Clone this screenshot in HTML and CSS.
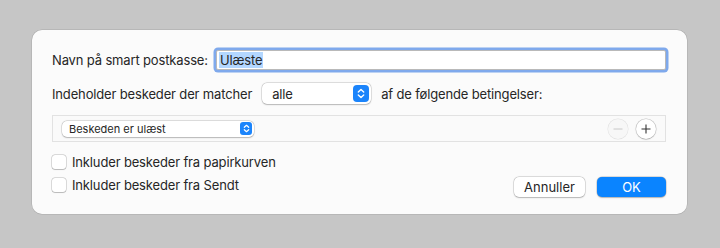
FILE: index.html
```html
<!DOCTYPE html>
<html lang="da">
<head>
  <meta charset="UTF-8" />
  <title>Smart postkasse</title>
  <link rel="stylesheet" href="styles.css">
</head>
<body>
  <div class="sheet">
    <div class="row name-row">
      <label for="box-name">Navn på smart postkasse:</label>
      <div class="field"><span class="sel">Ulæste</span></div>
    </div>

    <div class="row match-row">
      <span>Indeholder beskeder der matcher</span>
      <div class="popup big">
        <span>alle</span>
        <span class="stepper">
          <svg width="8" height="11" viewBox="0 0 8 11"><path d="M1.3 4 L4 1.5 L6.7 4 M1.3 7 L4 9.5 L6.7 7" fill="none" stroke="#fff" stroke-width="1.4" stroke-linecap="round" stroke-linejoin="round"/></svg>
        </span>
      </div>
      <span>af de følgende betingelser:</span>
    </div>

    <div class="criteria">
      <div class="popup small">
        <span>Beskeden er ulæst</span>
        <span class="stepper">
          <svg width="7" height="9" viewBox="0 0 7 9"><path d="M1.3 3.3 L3.5 1.3 L5.7 3.3 M1.3 5.7 L3.5 7.7 L5.7 5.7" fill="none" stroke="#fff" stroke-width="1.2" stroke-linecap="round" stroke-linejoin="round"/></svg>
        </span>
      </div>
      <div class="round-btns">
        <span class="round off">
          <svg width="10" height="10" viewBox="0 0 10 10"><path d="M0.5 5 H9.5" stroke="#c8c8c8" stroke-width="1"/></svg>
        </span>
        <span class="round">
          <svg width="10" height="10" viewBox="0 0 10 10"><path d="M0.5 5 H9.5 M5 0.5 V9.5" stroke="#333" stroke-width="1.1"/></svg>
        </span>
      </div>
    </div>

    <div class="bottom">
      <div class="checks">
        <label class="check"><span class="box"></span>Inkluder beskeder fra papirkurven</label>
        <label class="check"><span class="box"></span>Inkluder beskeder fra Sendt</label>
      </div>
      <div class="buttons">
        <button class="btn">Annuller</button>
        <button class="btn primary">OK</button>
      </div>
    </div>
  </div>
</body>
</html>
```

FILE: styles.css
```css
html, body {
  margin: 0;
  height: 100%;
}
body {
  background: #c6c6c6;
  padding: 30px 0 0 32px;
  box-sizing: border-box;
  font-family: Inter, "Liberation Sans", sans-serif;
  font-size: 13px;
  letter-spacing: -0.15px;
  color: #262626;
}
.sheet {
  width: 655px;
  height: 184px;
  box-sizing: border-box;
  background: #fbfbfb;
  border-radius: 10px;
  padding: 20px 21px 0 20px;
  box-shadow: 0 0 0 0.5px rgba(0,0,0,0.15);
}
.row {
  display: flex;
  align-items: center;
}
.name-row {
  height: 20px;
  gap: 8px;
}
.field {
  flex: 1;
  height: 20px;
  box-sizing: border-box;
  background: #fff;
  border: 1px solid #b9b9b9;
  box-shadow: 0 0 0 2.5px #7fa9ec;
  border-radius: 2px;
  display: flex;
  align-items: center;
  padding-left: 2px;
}
.sel {
  background: #b3d7ff;
  line-height: 16px;
  padding: 0 1px;
}
.match-row {
  margin-top: 13px;
  height: 21px;
  gap: 10px;
}
.popup {
  background: #fff;
  border-radius: 5px;
  box-shadow: 0 0 0 0.5px rgba(0,0,0,0.18), 0 0.5px 1.5px rgba(0,0,0,0.2);
  display: flex;
  align-items: center;
  justify-content: space-between;
  box-sizing: border-box;
}
.popup.big {
  width: 109px;
  height: 21px;
  padding: 0 2px 0 10px;
}
.stepper {
  background: #1b84fb;
  border-radius: 4px;
  display: flex;
  align-items: center;
  justify-content: center;
}
.big .stepper {
  width: 16px;
  height: 17px;
}
.criteria {
  margin-top: 11px;
  height: 27px;
  box-sizing: border-box;
  border: 1px solid #e2e2e2;
  background: #fafafa;
  display: flex;
  align-items: center;
  justify-content: space-between;
  padding: 0 9px 0 9px;
}
.popup.small {
  width: 192px;
  height: 16px;
  font-size: 11px;
  letter-spacing: 0;
  padding: 0 2px 0 7px;
}
.small .stepper {
  width: 12px;
  height: 13px;
  border-radius: 3px;
}
.round-btns {
  display: flex;
  gap: 8px;
}
.round {
  width: 20px;
  height: 20px;
  border-radius: 50%;
  background: #fff;
  box-shadow: 0 0 0 0.5px rgba(0,0,0,0.2), 0 0.5px 1.5px rgba(0,0,0,0.2);
  display: flex;
  align-items: center;
  justify-content: center;
}
.round.off {
  background: #f7f7f7;
  box-shadow: 0 0 0 0.5px rgba(0,0,0,0.1);
}
.bottom {
  display: flex;
  justify-content: space-between;
  align-items: flex-end;
  margin-top: 12px;
}
.checks {
  display: flex;
  flex-direction: column;
  gap: 7px;
}
.check {
  display: flex;
  align-items: center;
  gap: 6px;
  height: 16px;
}
.box {
  width: 14px;
  height: 14px;
  box-sizing: border-box;
  background: #fff;
  border-radius: 3px;
  box-shadow: 0 0 0 0.5px rgba(0,0,0,0.25), 0 0.5px 1px rgba(0,0,0,0.15);
}
.buttons {
  display: flex;
  gap: 12px;
  margin-bottom: -4px;
}
.btn {
  font: inherit;
  color: #262626;
  height: 20px;
  border: none;
  border-radius: 5px;
  background: #fff;
  box-shadow: 0 0 0 0.5px rgba(0,0,0,0.2), 0 0.5px 1.5px rgba(0,0,0,0.2);
  width: 71px;
  padding: 0;
}
.btn.primary {
  width: 69px;
  background: #0a84ff;
  color: #fff;
}
```
